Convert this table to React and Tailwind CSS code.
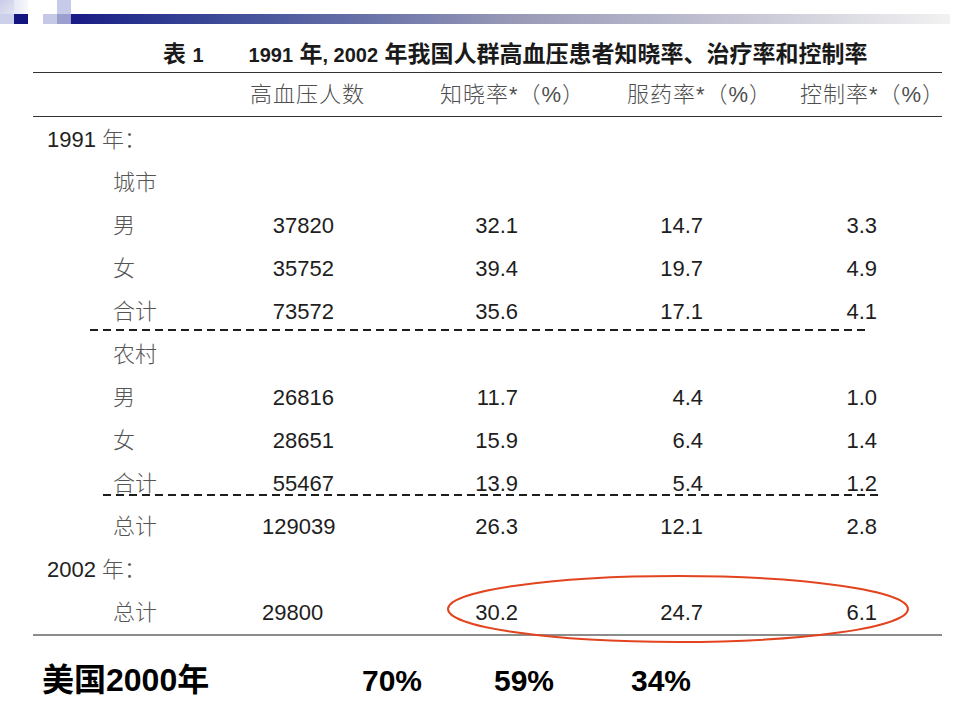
import React from "react";

const SANS = '"Liberation Sans", "Noto Sans CJK SC", sans-serif';

const rows = [
  { t: "year", year: "1991", label: "年：" },
  { t: "sub", label: "城市" },
  { t: "data", label: "男", v: ["37820", "32.1", "14.7", "3.3"] },
  { t: "data", label: "女", v: ["35752", "39.4", "19.7", "4.9"] },
  { t: "data", label: "合计", v: ["73572", "35.6", "17.1", "4.1"] },
  { t: "dash1" },
  { t: "sub", label: "农村" },
  { t: "data", label: "男", v: ["26816", "11.7", "4.4", "1.0"] },
  { t: "data", label: "女", v: ["28651", "15.9", "6.4", "1.4"] },
  { t: "data", label: "合计", v: ["55467", "13.9", "5.4", "1.2"] },
  { t: "dash2" },
  { t: "data", label: "总计", v: ["129039", "26.3", "12.1", "2.8"] },
  { t: "year", year: "2002", label: "年：" },
  { t: "data", label: "总计", v: ["29800", "30.2", "24.7", "6.1"], shift: true },
];

function Row({ r }) {
  if (r.t === "dash1") {
    return (
      <div className="-mt-[4px] mb-[2px] ml-[57px] h-[2px] w-[780px] bg-[repeating-linear-gradient(90deg,#1e1e1e_0px,#1e1e1e_8px,transparent_8px,transparent_13px)]" />
    );
  }
  if (r.t === "dash2") {
    return (
      <div className="-mt-[11px] mb-[9px] ml-[70px] h-[2px] w-[777px] bg-[repeating-linear-gradient(90deg,#1e1e1e_0px,#1e1e1e_8px,transparent_8px,transparent_13px)]" />
    );
  }
  if (r.t === "year") {
    return (
      <div className="flex h-[43px] items-center pl-[14px] text-[22px]">
        <span className="text-[#222]">{r.year}</span>
        <span className="ml-[6px] font-light text-[#555]">{r.label}</span>
      </div>
    );
  }
  if (r.t === "sub") {
    return (
      <div className="flex h-[43px] items-center pl-[80px] text-[22px] font-light text-[#555]">
        {r.label}
      </div>
    );
  }
  return (
    <div className="grid h-[43px] grid-cols-[229px_72px_184px_185px_174px] items-center text-[22px]">
      <div className="pl-[80px] font-light text-[#555]">{r.label}</div>
      <div className={"text-right text-[#1e1e1e] " + (r.shift ? "pr-[11px]" : "")}>{r.v[0]}</div>
      <div className="text-right text-[#1e1e1e]">{r.v[1]}</div>
      <div className="text-right text-[#1e1e1e]">{r.v[2]}</div>
      <div className="text-right text-[#1e1e1e]">{r.v[3]}</div>
    </div>
  );
}

export default function App() {
  return (
    <div className="relative h-[720px] w-[960px] overflow-hidden bg-white" style={{ fontFamily: SANS }}>
      {/* decorative header strip */}
      <div className="flex h-[24px]">
        <div className="flex w-[14px] flex-col">
          <div className="h-[14px] bg-linear-to-br from-[#c9cce8] to-[#e2e4f3]" />
          <div className="h-[10px] bg-[#cdd0ea]" />
        </div>
        <div className="flex w-[14px] flex-col">
          <div className="h-[14px] bg-linear-to-r from-[#e6e8f5] to-[#f8f8fc]" />
          <div className="h-[10px] bg-[#14147e]" />
        </div>
        <div className="w-[15px]" />
        <div className="flex w-[14px] flex-col">
          <div className="h-[14px]" />
          <div className="h-[10px] bg-[#c6c9e6]" />
        </div>
        <div className="flex w-[14px] flex-col">
          <div className="h-[14px] bg-[#c8cbe7]" />
          <div className="h-[10px] bg-[#9a9fd0]" />
        </div>
        <div className="flex flex-1 flex-col pr-[10px]">
          <div className="h-[14px]" />
          <div className="h-[10px] bg-linear-to-r from-[#1a1a85] via-[#9898b6] to-[#f2f2f2]" />
        </div>
      </div>

      {/* title */}
      <div className="mt-[15px] flex h-[30px] items-center pl-[163px] text-[23px] font-bold leading-[30px] text-[#1a1a1a]">
        <span>
          表 <span className="text-[20px]">1</span>
        </span>
        <span className="ml-[45px]">
          <span className="text-[20px]">1991</span> 年<span className="text-[20px]">, 2002</span> 年我国人群高血压患者知晓率、治疗率和控制率
        </span>
      </div>

      {/* table */}
      <div className="ml-[33px] mt-[3px] w-[909px]">
        <div className="grid h-[45px] grid-cols-[217px_190px_187px_173px_1fr] items-center border-y-[1.5px] border-[#333] text-[22px] font-light tracking-[1px] text-[#4e4e4e]">
          <div />
          <div>高血压人数</div>
          <div>知晓率*（%）</div>
          <div>服药率*（%）</div>
          <div>控制率*（%）</div>
        </div>
        <div className="flex flex-col border-b-2 border-[#8c8c8c] pt-[1px]">
          {rows.map((r, i) => (
            <Row key={i} r={r} />
          ))}
        </div>
      </div>

      {/* USA 2000 summary */}
      <div className="mt-[26px] flex h-[36px] items-center font-bold text-black">
        <span className="w-[362px] pl-[42px] text-[32px]">美国2000年</span>
        <span className="w-[132px] text-[30px]">70%</span>
        <span className="w-[137px] text-[30px]">59%</span>
        <span className="text-[30px]">34%</span>
      </div>

      {/* red highlight ellipse */}
      <svg
        className="pointer-events-none absolute left-[446px] top-[574px]"
        width="464"
        height="70"
        viewBox="0 0 464 70"
      >
        <ellipse cx="232" cy="35" rx="230" ry="33" fill="none" stroke="#e2441f" strokeWidth="2" />
      </svg>
    </div>
  );
}
